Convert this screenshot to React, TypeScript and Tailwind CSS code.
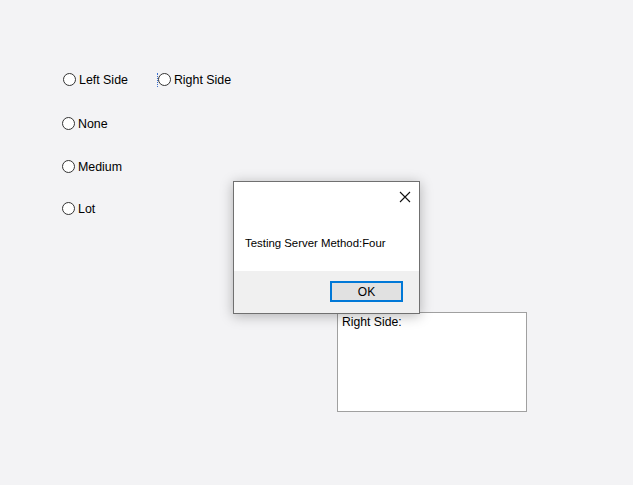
import React from "react";

function Radio({ label, focus }: { label: string; focus?: boolean }) {
  return (
    <div className="flex items-center">
      <div className={focus ? "flex items-center border-l border-dotted border-[#3b6fd0] pl-0 h-[14px]" : "flex items-center"}>
        <div className="w-[13px] h-[13px] rounded-full border border-[#333333] bg-white box-border" />
      </div>
      <span className="ml-[3px] text-[12.4px] leading-[14px] text-black">{label}</span>
    </div>
  );
}

export default function App() {
  return (
    <div
      className="relative w-[633px] h-[485px] bg-[#f3f3f5] overflow-hidden"
      style={{ fontFamily: '"Liberation Sans", Arial, sans-serif' }}
    >
      <div className="pt-[73px] pl-[63px]">
        <div className="flex items-center h-[13px]">
          <Radio label="Left Side" />
          <div className="ml-[29px]">
            <Radio label="Right Side" focus />
          </div>
        </div>
        <div className="-ml-[1px] mt-[31px] h-[13px] flex items-center">
          <Radio label="None" />
        </div>
        <div className="-ml-[1px] mt-[30px] h-[13px] flex items-center">
          <Radio label="Medium" />
        </div>
        <div className="-ml-[1px] mt-[29px] h-[13px] flex items-center">
          <Radio label="Lot" />
        </div>
      </div>

      <div className="ml-[337px] mt-[97px] w-[190px] h-[100px] border border-[#a0a0a0] bg-white box-border">
        <div className="pl-[4px] pt-[2px] text-[12.2px] leading-[14px] text-black">Right Side:</div>
      </div>

      <div className="absolute left-[233px] top-[181px] w-[187px] h-[133px] border border-[#707070] bg-white box-border shadow-[0_2px_12px_rgba(0,0,0,0.28)] flex flex-col">
        <div className="flex-1 relative">
          <div className="absolute right-[8px] top-[9px] w-[12px] h-[12px]">
            <svg width="12" height="12" viewBox="0 0 12 12">
              <path d="M1 1 L11 11 M11 1 L1 11" stroke="#111" strokeWidth="1.1" fill="none" />
            </svg>
          </div>
          <div className="pt-[54px] pl-[11px] text-[11.4px] leading-[14px] text-black">
            Testing Server Method:Four
          </div>
        </div>
        <div className="h-[42px] bg-[#f0f0f0] flex justify-end items-start pr-[16px] pt-[10px]">
          <div className="w-[73px] h-[21px] border-2 border-[#0078d7] bg-[#e1e1e1] box-border flex items-center justify-center text-[12px] text-black">
            OK
          </div>
        </div>
      </div>
    </div>
  );
}
